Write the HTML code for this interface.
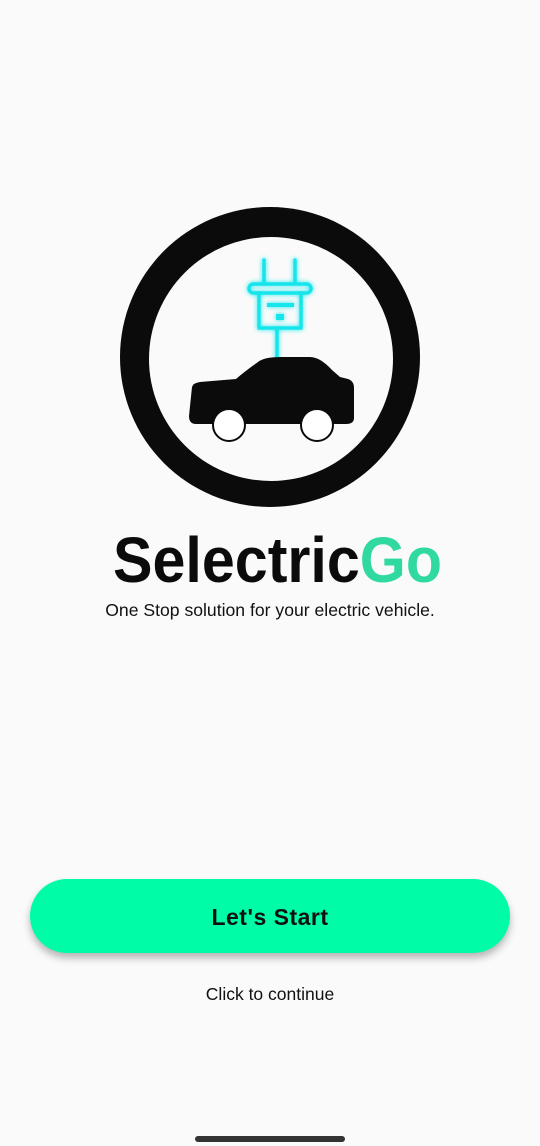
<!DOCTYPE html>
<html><head><style>
html,body{margin:0;padding:0;background:#fafafa;}
body{width:540px;height:1146px;position:relative;overflow:hidden;font-family:"Liberation Sans",sans-serif;}
.sub{position:absolute;left:0;width:540px;top:600px;text-align:center;font-size:17.6px;color:#111;}
.btn{position:absolute;left:30px;top:879px;width:480px;height:74px;border-radius:37px;background:#00fca6;box-shadow:0 5px 8px rgba(0,0,0,0.28);text-align:center;line-height:76px;font-weight:bold;font-size:23px;color:#111;letter-spacing:0.5px;}
.cc{position:absolute;left:0;width:540px;top:984px;text-align:center;font-size:17.5px;color:#111;}
.bar{position:absolute;left:195px;top:1136px;width:150px;height:6px;border-radius:3px;background:#333;}
</style></head><body>
<svg width="540" height="640" style="position:absolute;left:0;top:0">
  <defs><filter id="g" x="-50%" y="-50%" width="200%" height="200%"><feGaussianBlur stdDeviation="2.5" result="b"/><feMerge><feMergeNode in="b"/><feMergeNode in="SourceGraphic"/></feMerge></filter></defs>
  <circle cx="270" cy="357" r="150" fill="#0b0b0b"/>
  <circle cx="271" cy="359" r="122" fill="#fafafa"/>
  <g filter="url(#g)" stroke="#16e6ec" stroke-width="3.5" fill="none" stroke-linecap="round" stroke-linejoin="round">
    <line x1="264" y1="260" x2="264" y2="283"/>
    <line x1="295" y1="260" x2="295" y2="283"/>
    <rect x="249" y="284" width="62" height="9" rx="4.5"/>
    <path d="M259 293 V328 H301 V293"/>
    <line x1="277" y1="330" x2="277" y2="358"/>
    <rect x="267" y="303" width="27" height="4" fill="#16e6ec" stroke="none"/>
    <rect x="276" y="314" width="8" height="6" fill="#16e6ec" stroke="none"/>
  </g>
  <path d="M192 387 Q193 383 200 382 L236 379 Q244 372 258 362 Q264 357 280 357 L310 357 Q320 357 332 370 L340 377 L348 379 Q354 381 354 388 L354 418 Q354 424 346 424 L196 424 Q189 424 189 416 Z" fill="#0b0b0b"/>
  <circle cx="229" cy="425" r="16" fill="#fff" stroke="#0b0b0b" stroke-width="2"/>
  <circle cx="317" cy="425" r="16" fill="#fff" stroke="#0b0b0b" stroke-width="2"/>
  <text x="113" y="582" textLength="329" lengthAdjust="spacingAndGlyphs" font-family="Liberation Sans, sans-serif" font-weight="bold" font-size="64" fill="#0b0b0b">Selectric<tspan fill="#2fd9a0">Go</tspan></text>
</svg>
<div class="sub">One Stop solution for your electric vehicle.</div>
<div class="btn">Let's Start</div>
<div class="cc">Click to continue</div>
<div class="bar"></div>
</body></html>
